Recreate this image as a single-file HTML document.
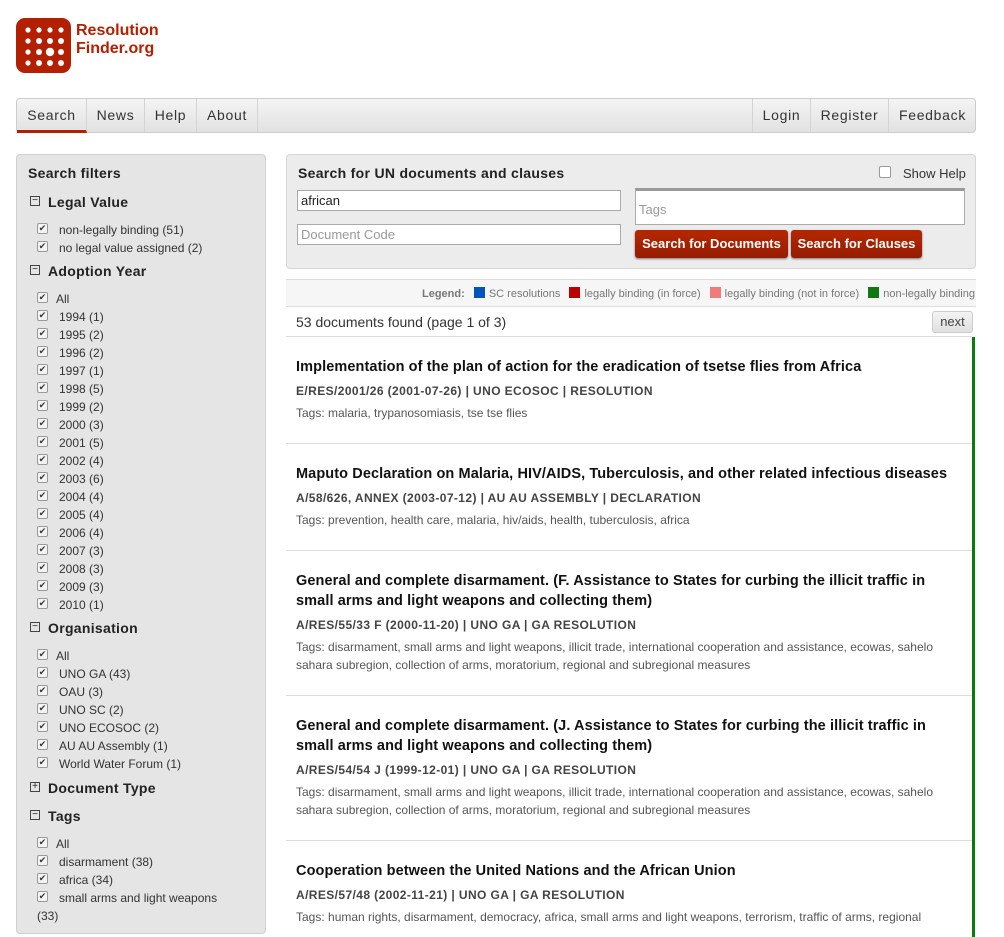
<!DOCTYPE html>
<html><head><meta charset="utf-8"><style>
*{box-sizing:border-box;margin:0;padding:0}
body{width:1004px;height:920px;overflow:hidden;background:#fff;font-family:"Liberation Sans",sans-serif;color:#333;position:relative}
.a{position:absolute;white-space:nowrap}
.logo{left:16px;top:18px;width:55px;height:55px;background:#b32000;border-radius:9px}
.brand{left:76px;top:22px;color:#b32000;font-weight:bold;font-size:16px;line-height:18px}
.nav{left:16px;top:98px;width:960px;height:35px;background:linear-gradient(#f4f4f4,#e2e2e2);border:1px solid #ccc;border-radius:4px}
.ni{position:absolute;top:0;height:33px;line-height:33px;font-size:14px;letter-spacing:.7px;color:#333;text-align:center;border-right:1px solid #d4d4d4}
.side{left:16px;top:154px;width:250px;height:780px;background:#e5e5e5;border:1px solid #cfcfcf;border-radius:4px}
.h{font-weight:bold;font-size:14px;color:#222;letter-spacing:.3px}
.cb{position:absolute;width:11px;height:11px;border:1px solid #999;border-radius:2px;background:#f4f4f4;font-size:9px;line-height:9px;text-align:center;color:#333}
.li{font-size:12px;color:#333}
.bx{position:absolute;width:10px;height:10px;border:1px solid #444;font-size:10px;line-height:8px;text-align:center;color:#222}
.panel{left:286px;top:154px;width:690px;height:115px;background:#ececec;border:1px solid #d6d6d6;border-radius:4px}
.inp{position:absolute;background:#fff;border:1px solid #aaa;font-size:13px;padding-left:3px}
.btn{position:absolute;top:230px;height:28px;line-height:28px;background:linear-gradient(#b52800,#961c00);color:#fff;font-weight:bold;font-size:13px;border-radius:3px;text-align:center;box-shadow:0 1px 2px #777}
.t{font-weight:bold;font-size:14.5px;color:#111;line-height:20px;letter-spacing:.1px}
.m{font-weight:bold;font-size:12px;color:#444;letter-spacing:.4px}
.g{font-size:12px;color:#555;line-height:18px}
.sep{position:absolute;left:286px;width:686px;height:1px;background:#ddd}
</style></head><body>
<div class="a logo">
<svg width="55" height="55"><g fill="#fff">
<circle cx="12" cy="12" r="2.6"/><circle cx="23" cy="12" r="2.6"/><circle cx="34" cy="12" r="2.6"/><circle cx="45" cy="12" r="2.6"/>
<circle cx="12" cy="23" r="2.6"/><circle cx="23" cy="23" r="3"/><circle cx="34" cy="23" r="3"/><circle cx="45" cy="23" r="3"/>
<circle cx="12" cy="34" r="2.6"/><circle cx="23" cy="34" r="3"/><circle cx="34" cy="34" r="4.2"/><circle cx="45" cy="34" r="3"/>
<circle cx="12" cy="45" r="2.6"/><circle cx="23" cy="45" r="3"/><circle cx="34" cy="45" r="3"/><circle cx="45" cy="45" r="3"/></g></svg></div>
<div class="a brand">Resolution<br>Finder.org</div>
<div class="a nav">
<div class="ni" style="left:0;width:70px;border-bottom:3px solid #b32000;height:34px">Search</div>
<div class="ni" style="left:70px;width:58px">News</div>
<div class="ni" style="left:128px;width:52px">Help</div>
<div class="ni" style="left:180px;width:61px">About</div>
<div class="ni" style="left:735px;width:59px;border-left:1px solid #d4d4d4">Login</div>
<div class="ni" style="left:794px;width:78px">Register</div>
<div class="ni" style="left:872px;width:87px;border-right:0">Feedback</div>
</div>
<div class="a side"></div>
<div class="a h" style="left:28px;top:165px">Search filters</div>
<div class="a bx" style="left:30px;top:196px">−</div><div class="a h" style="left:48px;top:194px">Legal Value</div>
<div class="a bx" style="left:30px;top:265px">−</div><div class="a h" style="left:48px;top:263px">Adoption Year</div>
<div class="a bx" style="left:30px;top:622px">−</div><div class="a h" style="left:48px;top:620px">Organisation</div>
<div class="a bx" style="left:30px;top:782px">+</div><div class="a h" style="left:48px;top:780px">Document Type</div>
<div class="a bx" style="left:30px;top:810px">−</div><div class="a h" style="left:48px;top:808px">Tags</div>
<div id="cbs"></div>
<script>
var items=[[229,59,"non-legally binding (51)"],[247,59,"no legal value assigned (2)"],[298,56,"All"]];
var yrs=["1994 (1)","1995 (2)","1996 (2)","1997 (1)","1998 (5)","1999 (2)","2000 (3)","2001 (5)","2002 (4)","2003 (6)","2004 (4)","2005 (4)","2006 (4)","2007 (3)","2008 (3)","2009 (3)","2010 (1)"];
yrs.forEach(function(s,i){items.push([316+18*i,59,s])});
items.push([655,56,"All"]);
["UNO GA (43)","OAU (3)","UNO SC (2)","UNO ECOSOC (2)","AU AU Assembly (1)","World Water Forum (1)"].forEach(function(s,i){items.push([673+18*i,59,s])});
items.push([843,56,"All"]);
["disarmament (38)","africa (34)","small arms and light weapons"].forEach(function(s,i){items.push([861+18*i,59,s])});
var h="";items.forEach(function(it){h+='<div class="cb" style="left:37px;top:'+(it[0]-6)+'px">✔</div><div class="a li" style="left:'+it[1]+'px;top:'+(it[0]-6)+'px">'+it[2]+'</div>'});
h+='<div class="a li" style="left:37px;top:909px">(33)</div>';
document.getElementById("cbs").innerHTML=h;
</script>
<div class="a panel"></div>
<div class="a h" style="left:298px;top:165px">Search for UN documents and clauses</div>
<div class="cb" style="left:879px;top:166px;width:12px;height:12px;background:#fff"></div>
<div class="a li" style="left:903px;top:166px;font-size:13px">Show Help</div>
<div class="inp" style="left:297px;top:190px;width:324px;height:21px;color:#222;line-height:19px">african</div>
<div class="inp" style="left:297px;top:224px;width:324px;height:21px;color:#999;line-height:19px">Document Code</div>
<div class="inp" style="left:635px;top:188px;width:330px;height:37px;color:#999;line-height:38px;border-top:3px solid #999">Tags</div>
<div class="btn" style="left:635px;width:153px">Search for Documents</div>
<div class="btn" style="left:791px;width:131px">Search for Clauses</div>
<div class="a" style="left:286px;top:279px;width:690px;height:28px;background:#f6f6f6;border-top:1px solid #ddd;border-bottom:1px solid #ddd"></div>
<div class="a" style="left:422px;top:287px;font-size:11px;color:#777"><b>Legend:</b> <span style="display:inline-block;width:11px;height:11px;background:#0055bb;vertical-align:-1px;margin:0 4px 0 6px"></span>SC resolutions <span style="display:inline-block;width:11px;height:11px;background:#bb0000;vertical-align:-1px;margin:0 4px 0 6px"></span>legally binding (in force) <span style="display:inline-block;width:11px;height:11px;background:#f07b7b;vertical-align:-1px;margin:0 4px 0 6px"></span>legally binding (not in force) <span style="display:inline-block;width:11px;height:11px;background:#107810;vertical-align:-1px;margin:0 4px 0 6px"></span>non-legally binding</div>
<div class="a" style="left:296px;top:314px;font-size:14px;color:#333">53 documents found (page 1 of 3)</div>
<div class="a" style="left:932px;top:311px;width:41px;height:22px;border:1px solid #ccc;border-radius:3px;background:linear-gradient(#f4f4f4,#e0e0e0);font-size:13px;text-align:center;line-height:20px;color:#444">next</div>
<div class="sep" style="top:336px"></div>
<div class="a" style="left:972px;top:337px;width:3px;height:600px;background:#107810"></div>

<div class="a t" style="left:296px;top:357px">Implementation of the plan of action for the eradication of tsetse flies from Africa</div>
<div class="a m" style="left:296px;top:384px">E/RES/2001/26 (2001-07-26) | UNO ECOSOC | RESOLUTION</div>
<div class="a g" style="left:296px;top:404px">Tags: malaria, trypanosomiasis, tse tse flies</div>
<div class="sep" style="top:443px"></div>

<div class="a t" style="left:296px;top:464px">Maputo Declaration on Malaria, HIV/AIDS, Tuberculosis, and other related infectious diseases</div>
<div class="a m" style="left:296px;top:491px">A/58/626, ANNEX (2003-07-12) | AU AU ASSEMBLY | DECLARATION</div>
<div class="a g" style="left:296px;top:511px">Tags: prevention, health care, malaria, hiv/aids, health, tuberculosis, africa</div>
<div class="sep" style="top:550px"></div>

<div class="a t" style="left:296px;top:571px">General and complete disarmament. (F. Assistance to States for curbing the illicit traffic in<br>small arms and light weapons and collecting them)</div>
<div class="a m" style="left:296px;top:618px">A/RES/55/33 F (2000-11-20) | UNO GA | GA RESOLUTION</div>
<div class="a g" style="left:296px;top:638px">Tags: disarmament, small arms and light weapons, illicit trade, international cooperation and assistance, ecowas, sahelo<br>sahara subregion, collection of arms, moratorium, regional and subregional measures</div>
<div class="sep" style="top:695px"></div>

<div class="a t" style="left:296px;top:716px">General and complete disarmament. (J. Assistance to States for curbing the illicit traffic in<br>small arms and light weapons and collecting them)</div>
<div class="a m" style="left:296px;top:763px">A/RES/54/54 J (1999-12-01) | UNO GA | GA RESOLUTION</div>
<div class="a g" style="left:296px;top:783px">Tags: disarmament, small arms and light weapons, illicit trade, international cooperation and assistance, ecowas, sahelo<br>sahara subregion, collection of arms, moratorium, regional and subregional measures</div>
<div class="sep" style="top:840px"></div>

<div class="a t" style="left:296px;top:861px">Cooperation between the United Nations and the African Union</div>
<div class="a m" style="left:296px;top:888px">A/RES/57/48 (2002-11-21) | UNO GA | GA RESOLUTION</div>
<div class="a g" style="left:296px;top:908px">Tags: human rights, disarmament, democracy, africa, small arms and light weapons, terrorism, traffic of arms, regional</div>
</body></html>
